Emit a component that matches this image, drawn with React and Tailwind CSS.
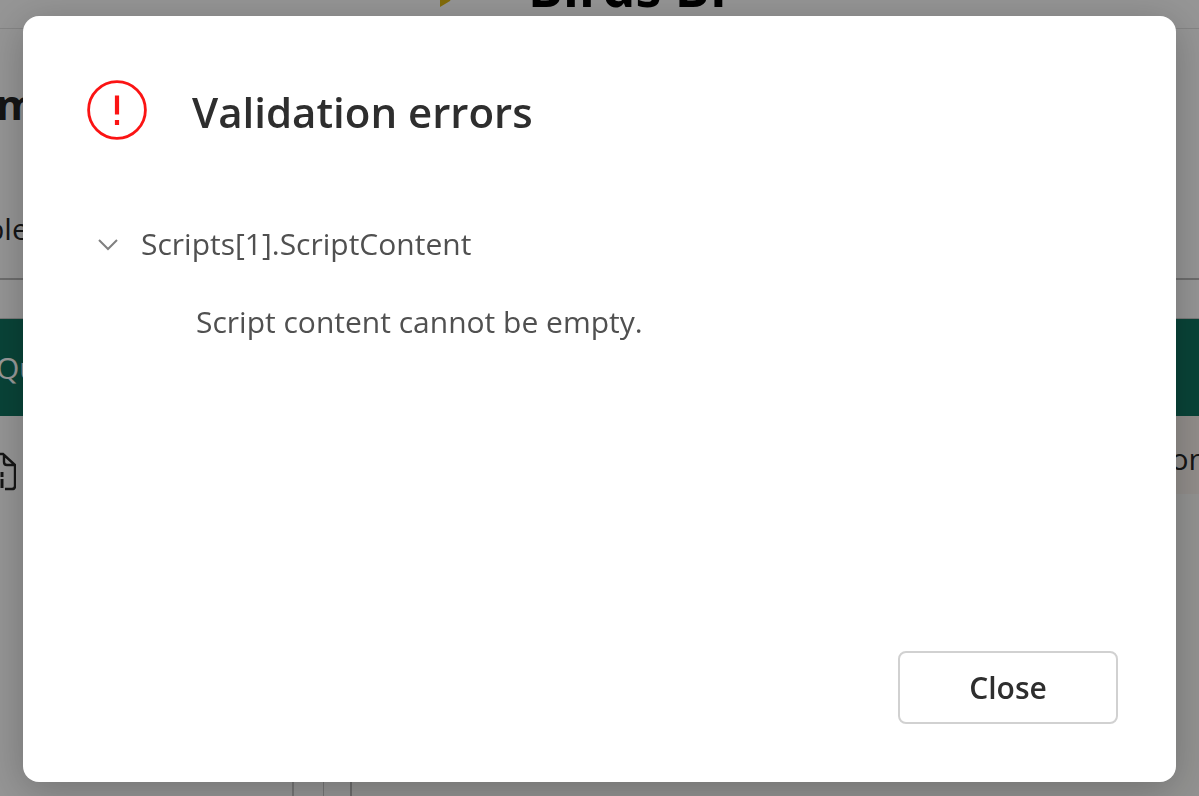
import React from "react";

function Backdrop() {
    return (
        <div className="flex h-screen flex-col overflow-hidden bg-[#f8f8f8] text-[#242424]" aria-hidden="true">
            <header className="flex h-[29px] shrink-0 items-end justify-center gap-[72px] border-b border-[#dcdcdc] pr-9 pb-[17px]">
                <svg className="h-12 w-5 text-[#d9b310]" viewBox="0 0 20 48" fill="currentColor">
                    <path d="M4 0h14l-4 18h6L4 43V26H0z" />
                    <path d="M4 30h14l-4 8-10 6z" />
                </svg>
                <span className="text-[52px] leading-[48px] font-bold text-black">Birds BI</span>
            </header>
            <section className="flex h-[251px] shrink-0 flex-col items-start justify-between border-b-2 border-[#b5b5b5] pt-[51px] pb-[29px]">
                <span className="-ml-1 text-[42px] leading-[48px] font-bold">m</span>
                <span className="-ml-[14px] text-[30px] leading-10">ble</span>
            </section>
            <div className="h-[39px] shrink-0 border-b border-[#c8c8c8]" />
            <nav className="flex h-[97px] shrink-0 items-center bg-[#0f705d]">
                <span className="-ml-1 text-[30px] leading-10 text-white">Qu</span>
            </nav>
            <main className="flex flex-1">
                <aside className="w-[294px] border-r-2 border-[#c4c4c4] pt-9">
                    <svg className="-ml-4 h-10 w-8" viewBox="0 0 32 40" fill="none" stroke="currentColor" strokeWidth="2.4">
                        <path d="M13 2h6l12 11v21q0 3-3 3h-7M20 2v8q0 3 3 3h8" />
                        <path d="M18 20v5M18 27v9" strokeWidth="3" />
                    </svg>
                </aside>
                <div className="w-[30px] border-r border-[#c4c4c4]" />
                <div className="w-7 border-r-2 border-[#b5b5b5]" />
                <div className="flex-1 bg-[#f4f4f2]">
                    <div className="flex h-[78px] items-center justify-end bg-[#f3ece7]">
                        <span className="-mr-2 pt-2 text-[30px] leading-10">on</span>
                    </div>
                </div>
            </main>
        </div>
    );
}

function ErrorIcon() {
    return (
        <svg className="size-[60px] shrink-0 text-[#fb1414]" viewBox="0 0 60 60" fill="none" stroke="currentColor">
            <circle cx="30" cy="30" r="28.4" strokeWidth="2.8" />
            <path d="M30 15.5v19M30 40v5" strokeWidth="4.2" />
        </svg>
    );
}

export default function App() {
    return (
        <div className="font-['Open_Sans','Noto_Sans',sans-serif]">
            <Backdrop />
            <div className="fixed inset-0 flex bg-black/40 px-[23px] pt-4 pb-[14px]">
                <div
                    role="dialog"
                    aria-modal="true"
                    aria-labelledby="dialog-title"
                    className="flex flex-1 flex-col rounded-2xl bg-white px-[58px] pt-[64px] pb-[58px] shadow-[0_8px_40px_rgba(0,0,0,0.24)]"
                >
                    <div className="flex items-start gap-[45px] pl-[6px]">
                        <ErrorIcon />
                        <h1 id="dialog-title" className="text-[42px] leading-[64px] font-semibold text-[#2e2e2e]">
                            Validation errors
                        </h1>
                    </div>
                    <details open className="mt-[80px] flex-1 text-[30px] leading-10 text-[#505050]">
                        <summary className="flex list-none items-center gap-[22px] pl-[16px]">
                            <svg className="size-[22px]" viewBox="0 0 22 22" fill="none" stroke="#808080" strokeWidth="2">
                                <path d="M2 7l9 9 9-9" />
                            </svg>
                            Scripts[1].ScriptContent
                        </summary>
                        <p className="mt-[38px] pl-[115px]">Script content cannot be empty.</p>
                    </details>
                    <button
                        type="button"
                        className="h-[73px] w-[220px] self-end rounded-lg border-2 border-[#d1d1d1] text-[30px] leading-10 font-semibold text-[#2e2e2e]"
                    >
                        Close
                    </button>
                </div>
            </div>
        </div>
    );
}
